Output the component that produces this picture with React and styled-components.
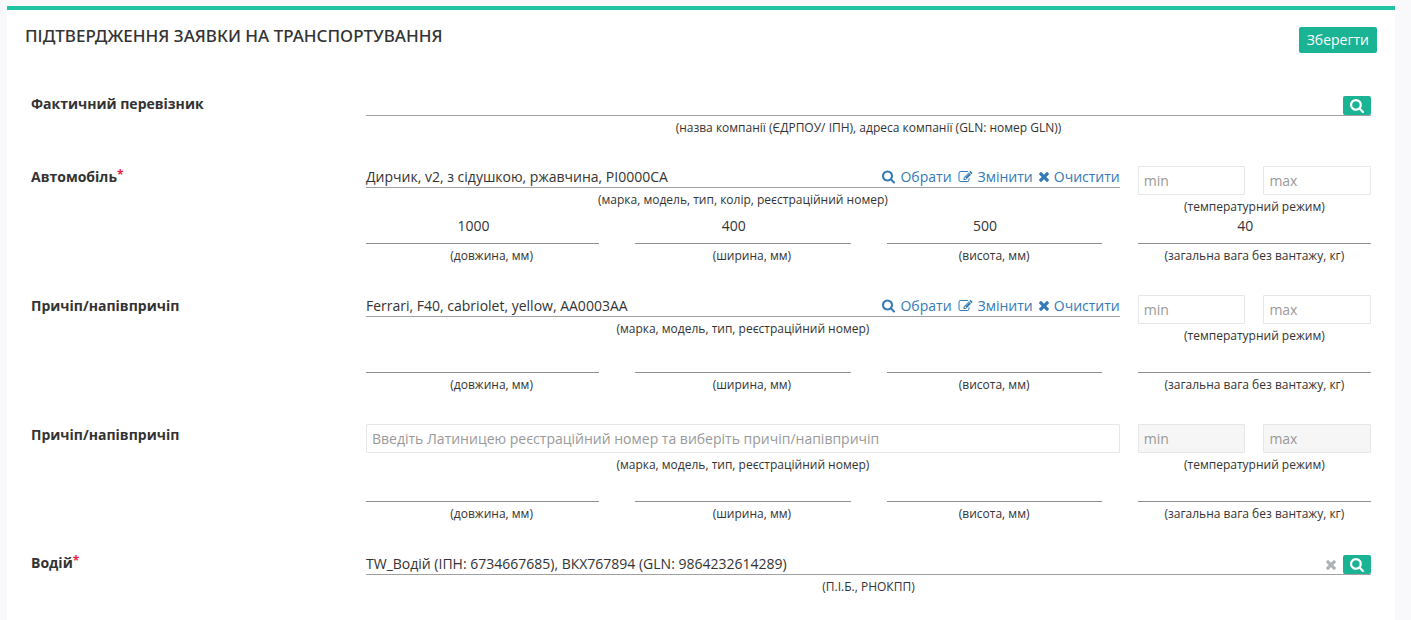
import React from "react";
import styled, { createGlobalStyle } from "styled-components";

const GlobalStyle = createGlobalStyle`
  * { box-sizing: border-box; }
  body {
    margin: 0;
    background: #f9f9fb;
    color: #333;
    font-family: "Open Sans", "Noto Sans", sans-serif;
    font-size: 14px;
    line-height: 20px;
  }
`;

const Page = styled.div`
  display: flex;
  min-height: 100vh;
  padding: 6px 16px 0 7px;
`;

const Panel = styled.main`
  flex: 1;
  min-width: 0;
  border-top: 4px solid #1fc5a3;
  background: #fff;
  padding: 16px 18px 24px;
`;

const Header = styled.header`
  display: flex;
  justify-content: space-between;
  align-items: flex-start;
`;

const Title = styled.h1`
  margin: 0;
  font-family: "Noto Sans", "Open Sans", sans-serif;
  font-size: 17px;
  line-height: 20px;
  font-weight: 500;
  text-transform: uppercase;
`;

const SaveButton = styled.button`
  height: 26px;
  margin-top: 1px;
  padding: 0 8px;
  border: 0;
  border-radius: 2px;
  background: #1ab394;
  color: #fff;
  font: inherit;
  line-height: 26px;
  cursor: pointer;
`;

const Form = styled.form`
  display: flex;
  flex-direction: column;
  gap: 29px;
  padding: 41px 6px 0;
`;

const Row = styled.div`
  display: grid;
  grid-template-columns: 1fr 3fr;
  padding-bottom: ${(p) => (p.$tall ? 1 : 0)}px;
`;

const RowLabel = styled.label`
  font-weight: 700;
  line-height: ${(p) => (p.$tall ? 22 : 20)}px;
`;

const Required = styled.sup`
  color: #ed1c47;
  font-size: 12px;
  line-height: 0;
  vertical-align: 3px;
`;

const Fields = styled.div`
  display: grid;
  grid-template-columns: repeat(4, 1fr);
  min-width: 0;
`;

const Main = styled.div`
  grid-column: span ${(p) => p.$span};
  min-width: 0;
`;

const Line = styled.div`
  display: flex;
  justify-content: space-between;
  align-items: center;
  height: 22px;
  border-bottom: 1px solid #a0a0a0;
`;

const Value = styled.output`
  min-width: 0;
  white-space: nowrap;
`;

const Actions = styled.div`
  display: flex;
  gap: 6px;
  align-items: center;
  margin-left: auto;
`;

const ActionLink = styled.a`
  display: flex;
  align-items: center;
  gap: 5px;
  color: #337ab7;
  text-decoration: none;
`;

const Glyph = styled.svg`
  display: block;
  height: 14px;
  width: ${(p) => p.$width}px;
  fill: currentColor;
`;

const SearchButton = styled.button`
  display: flex;
  align-items: center;
  justify-content: center;
  width: 28px;
  height: 19px;
  margin-top: 2px;
  padding: 0;
  border: 0;
  border-radius: 2px;
  background: #1ab394;
  color: #fff;
  cursor: pointer;
`;

const ClearButton = styled.button`
  padding: 0;
  margin: 2px 1px 0 0;
  border: 0;
  background: none;
  color: #b0b3b5;
  cursor: pointer;
`;

const Hint = styled.div`
  margin-top: 3px;
  font-size: 12px;
  line-height: 18px;
  text-align: center;
  white-space: nowrap;
`;

const TemperatureCell = styled.div`
  padding-left: 18px;
`;

const TemperaturePair = styled.div`
  display: grid;
  grid-template-columns: 1fr 1fr;
  gap: 18px;
`;

const TextInput = styled.input`
  display: block;
  width: 100%;
  min-width: 0;
  height: 29px;
  padding: 0 5px;
  border: 1px solid #e5e6e7;
  border-radius: 1px;
  background: #fff;
  color: #333;
  font: inherit;

  &::placeholder { color: #999; opacity: 1; }
  &:disabled { background: #f6f6f6; }
`;

const DimensionCell = styled.div`
  padding-left: ${(p) => (p.$first ? 0 : 18)}px;
`;

const DimensionValue = styled.output`
  display: block;
  height: 28px;
  margin-right: ${(p) => (p.$last ? 0 : 18)}px;
  padding-right: 18px;
  border-bottom: 1px solid #8f8f8f;
  text-align: center;
`;

const DimensionHint = styled(Hint)`
  margin-right: ${(p) => (p.$flush ? 18 : 0)}px;
`;

const PATHS = {
  search:
    "M1216 832q0-185-131.5-316.5t-316.5-131.5-316.5 131.5-131.5 316.5 131.5 316.5 316.5 131.5 316.5-131.5 131.5-316.5zm512 832q0 52-38 90t-90 38q-54 0-90-38l-343-342q-179 124-399 124-143 0-273.5-55.5t-225-150-150-225-55.5-273.5 55.5-273.5 150-225 225-150 273.5-55.5 273.5 55.5 225 150 150 225 55.5 273.5q0 220-124 399l343 343q37 37 37 90z",
  edit:
    "M888 1184l116-116-152-152-116 116v56h96v96h56zm440-720q-16-16-33 1l-350 350q-17 17-1 33t33-1l350-350q17-17 1-33zm80 594v190q0 119-84.5 203.5t-203.5 84.5h-832q-119 0-203.5-84.5t-84.5-203.5v-832q0-119 84.5-203.5t203.5-84.5h832q63 0 117 25 15 7 18 23 3 17-9 29l-49 49q-14 14-32 8-23-6-45-6h-832q-66 0-113 47t-47 113v832q0 66 47 113t113 47h832q66 0 113-47t47-113v-126q0-13 9-22l64-64q15-15 35-7t20 29zm-96-738l288 288-672 672h-288v-288zm444 132l-92 92-288-288 92-92q28-28 68-28t68 28l152 152q28 28 28 68t-28 68z",
  times:
    "M1490 1322q0 40-28 68l-136 136q-28 28-68 28t-68-28l-294-294-294 294q-28 28-68 28t-68-28l-136-136q-28-28-28-68t28-68l294-294-294-294q-28-28-28-68t28-68l136-136q28-28 68-28t68 28l294 294 294-294q28-28 68-28t68 28l136 136q28 28 28 68t-28 68l-294 294 294 294q28 28 28 68z",
};

const BOXES = {
  search: "64 128 1664 1664",
  edit: "0 0 1792 1792",
  times: "302 128 1188 1664",
};

const WIDTHS = { search: 13, edit: 15, times: 10 };

function Icon({ name, width = WIDTHS[name] }) {
  return (
    <Glyph viewBox={BOXES[name]} $width={width} aria-hidden="true">
      <path d={PATHS[name]} />
    </Glyph>
  );
}

const DIMENSIONS = ["(довжина, мм)", "(ширина, мм)", "(висота, мм)", "(загальна вага без вантажу, кг)"];

function VehicleRow({ id, label, required, value, hint, placeholder, dimensions = [] }) {
  const editable = value === undefined;
  return (
    <Row $tall>
      <RowLabel $tall htmlFor={id}>
        {label}
        {required && <Required>*</Required>}
      </RowLabel>
      <div>
        <Fields>
          <Main $span={3}>
            {editable ? (
              <TextInput id={id} type="text" placeholder={placeholder} />
            ) : (
              <Line>
                <Value id={id}>{value}</Value>
                <Actions>
                  <ActionLink href="#select"><Icon name="search" />Обрати</ActionLink>
                  <ActionLink href="#edit"><Icon name="edit" />Змінити</ActionLink>
                  <ActionLink href="#clear"><Icon name="times" />Очистити</ActionLink>
                </Actions>
              </Line>
            )}
            <Hint>{hint}</Hint>
          </Main>
          <TemperatureCell>
            <TemperaturePair>
              <TextInput type="text" placeholder="min" aria-label="Мінімальна температура" disabled={editable} />
              <TextInput type="text" placeholder="max" aria-label="Максимальна температура" disabled={editable} />
            </TemperaturePair>
            <Hint>(температурний режим)</Hint>
          </TemperatureCell>
        </Fields>
        <Fields>
          {DIMENSIONS.map((text, i) => (
            <DimensionCell key={text} $first={i === 0}>
              <DimensionValue $last={i === 3}>{dimensions[i]}</DimensionValue>
              <DimensionHint $flush={i === 2}>{text}</DimensionHint>
            </DimensionCell>
          ))}
        </Fields>
      </div>
    </Row>
  );
}

function LookupRow({ id, label, required, value, hint, clearable }) {
  return (
    <Row>
      <RowLabel htmlFor={id}>
        {label}
        {required && <Required>*</Required>}
      </RowLabel>
      <div>
        <Line>
          <Value id={id}>{value}</Value>
          <Actions>
            {clearable && (
              <ClearButton type="button" aria-label="Очистити"><Icon name="times" /></ClearButton>
            )}
            <SearchButton type="button" aria-label="Пошук"><Icon name="search" width={14} /></SearchButton>
          </Actions>
        </Line>
        <Hint>{hint}</Hint>
      </div>
    </Row>
  );
}

export default function App() {
  return (
    <>
      <GlobalStyle />
      <Page>
        <Panel>
          <Header>
            <Title>Підтвердження заявки на транспортування</Title>
            <SaveButton type="submit" form="transport">Зберегти</SaveButton>
          </Header>
          <Form id="transport">
            <LookupRow
              id="carrier"
              label="Фактичний перевізник"
              hint="(назва компанії (ЄДРПОУ/ ІПН), адреса компанії (GLN: номер GLN))"
            />
            <VehicleRow
              id="car"
              label="Автомобіль"
              required
              value="Дирчик, v2, з сідушкою, ржавчина, РІ0000СА"
              hint="(марка, модель, тип, колір, реєстраційний номер)"
              dimensions={[1000, 400, 500, 40]}
            />
            <VehicleRow
              id="trailer-1"
              label="Причіп/напівпричіп"
              value="Ferrari, F40, cabriolet, yellow, АА0003АА"
              hint="(марка, модель, тип, реєстраційний номер)"
            />
            <VehicleRow
              id="trailer-2"
              label="Причіп/напівпричіп"
              placeholder="Введіть Латиницею реєстраційний номер та виберіть причіп/напівпричіп"
              hint="(марка, модель, тип, реєстраційний номер)"
            />
            <LookupRow
              id="driver"
              label="Водій"
              required
              value="TW_Водій (ІПН: 6734667685), ВКХ767894 (GLN: 9864232614289)"
              hint="(П.І.Б., РНОКПП)"
              clearable
            />
          </Form>
        </Panel>
      </Page>
    </>
  );
}
